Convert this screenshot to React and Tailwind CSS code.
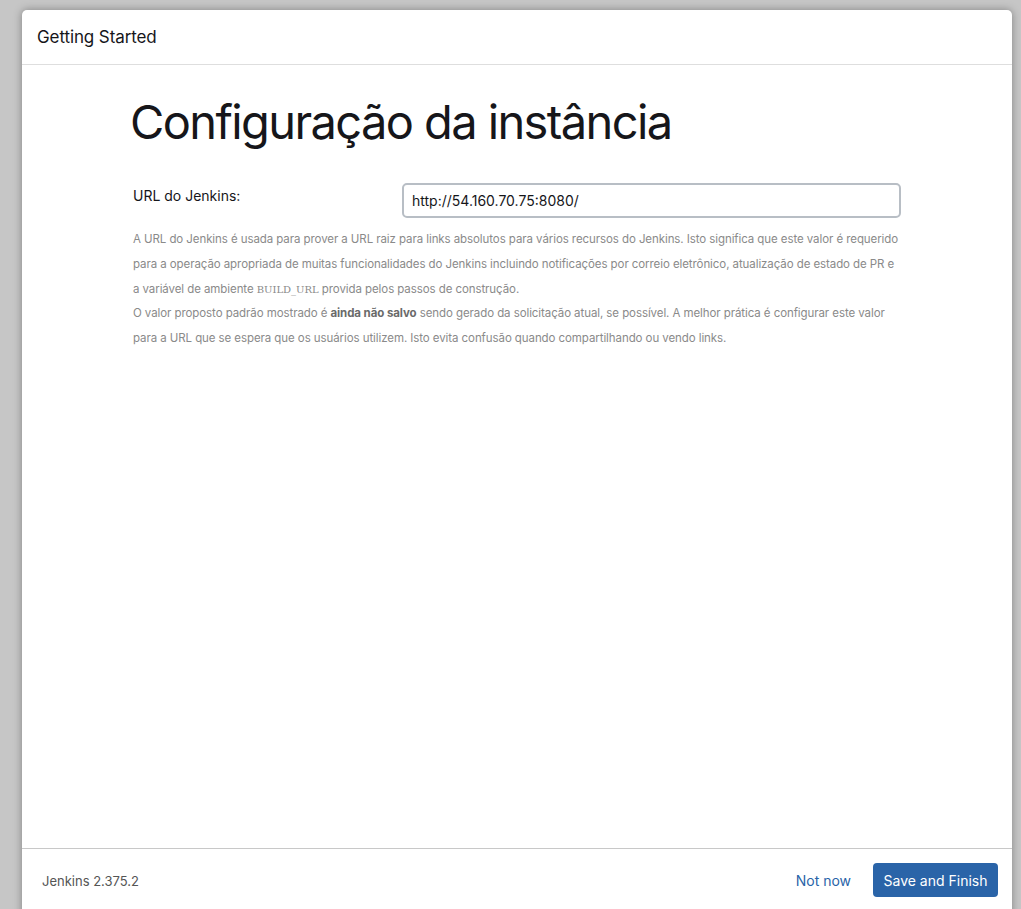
import React from 'react';

const App = () => {
  return (
    <div
      className="h-screen overflow-hidden bg-[#c6c6c6] pt-[10px] pl-[22px] pr-[9px]"
      style={{ fontFamily: 'Inter, "Noto Sans", sans-serif' }}
    >
      <div className="h-[910px] bg-white rounded-t-[5px] shadow-[0_0_8px_rgba(0,0,0,0.35)] flex flex-col">
        {/* header */}
        <div className="h-[55px] border-b border-[#dedede] flex items-center px-[15px] pt-[2px]">
          <h3 className="text-[17px] text-[#16161a] tracking-[-0.1px]">Getting Started</h3>
        </div>

        {/* body */}
        <div className="flex-1 px-[108px] pt-[27px]">
          <h1 className="text-[47px] leading-[60px] text-[#16161a] tracking-[-1.6px] mb-[31px]">
            Configuração da instância
          </h1>
          <div className="px-[3px]">
            <div className="flex items-center">
              <label className="w-[269px] text-[14px] text-[#16161a] -mt-[10px]">URL do Jenkins:</label>
              <input
                className="flex-1 h-[35px] border-2 border-[#b8bec5] rounded-[5px] px-[8px] text-[14px] text-[#16161a] outline-none"
                defaultValue="http://54.160.70.75:8080/"
              />
            </div>
            <div className="mt-[9px] text-[11.5px] leading-[24.8px] tracking-[-0.08px] text-[#8a8a8a]">
              <p>
                A URL do Jenkins é usada para prover a URL raiz para links absolutos para vários recursos do Jenkins. Isto significa que este valor é requerido para a operação apropriada de muitas funcionalidades do Jenkins incluindo notificações por correio eletrônico, atualização de estado de PR e a variável de ambiente{' '}
                <code className="text-[10px] leading-none tracking-normal" style={{ fontFamily: '"DejaVu Serif", "Liberation Serif", serif' }}>BUILD_URL</code>{' '}
                provida pelos passos de construção.
              </p>
              <p>
                O valor proposto padrão mostrado é <strong className="font-bold text-[#6a6a6a]">ainda não salvo</strong> sendo gerado da solicitação atual, se possível. A melhor prática é configurar este valor para a URL que se espera que os usuários utilizem. Isto evita confusão quando compartilhando ou vendo links.
              </p>
            </div>
          </div>
        </div>

        {/* footer */}
        <div className="h-[72px] border-t border-[#c8c8c8] flex items-start pt-[14px] px-[14px] shrink-0">
          <div className="flex-1 pl-[6px] pt-[9px] text-[13px] text-[#555]">Jenkins 2.375.2</div>
          <button className="text-[14px] text-[#2a64a8] px-[12px] h-[34px] mr-[10px]">Not now</button>
          <button className="h-[34px] px-[10.5px] rounded-[4px] bg-[#2a64a8] text-white text-[14px]">
            Save and Finish
          </button>
        </div>
      </div>
    </div>
  );
};

export default App;
